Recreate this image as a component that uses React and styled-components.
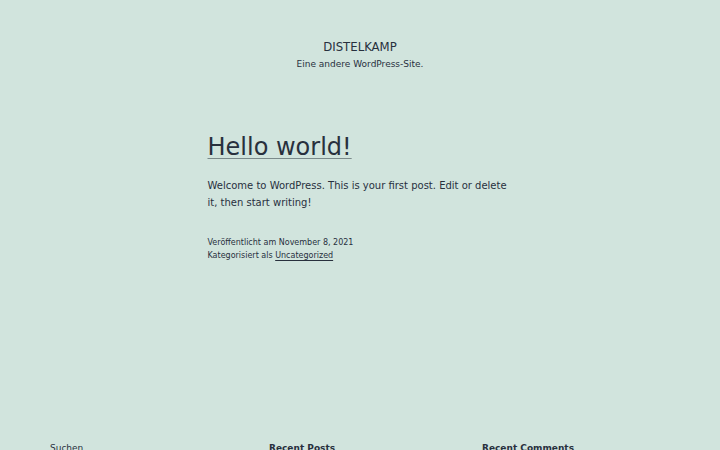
import styled, { createGlobalStyle } from 'styled-components';

const GlobalStyle = createGlobalStyle`
  html, body {
    margin: 0;
    padding: 0;
    background: #d1e4dd;
  }
  body {
    font-family: 'DejaVu Sans', sans-serif;
    color: #28303d;
  }
`;

const Page = styled.div`
  min-height: 450px;
  display: flex;
  flex-direction: column;
`;

const Header = styled.header`
  padding-top: 39px;
  text-align: center;
`;

const SiteTitle = styled.h1`
  margin: 0;
  font-size: 11.7px;
  font-weight: 400;
  line-height: 16px;
  text-transform: uppercase;
`;

const Tagline = styled.p`
  margin: 1px 0 0;
  font-size: 9px;
  line-height: 16px;
`;

const Article = styled.main`
  width: 305px;
  margin: 61px auto 0;
`;

const PostTitle = styled.h2`
  margin: 0;
  font-size: 24px;
  font-weight: 400;
  line-height: 28px;

  a {
    color: inherit;
    text-decoration: underline;
    text-decoration-thickness: 1px;
    text-underline-offset: 3px;
    text-decoration-color: #7b8a8b;
  }
`;

const Body = styled.p`
  margin: 16px 0 0;
  font-size: 10px;
  line-height: 17px;
`;

const Meta = styled.div`
  margin-top: 25px;
  font-size: 8px;
  line-height: 13px;

  a {
    color: inherit;
    text-decoration: underline;
    text-underline-offset: 2px;
  }
`;

const Footer = styled.footer`
  margin-top: auto;
  padding: 0 50px;
  display: grid;
  grid-template-columns: 219px 213px 1fr;
  height: 8px;
  overflow: visible;
`;

const Widget = styled.div`
  font-size: 9px;
  font-weight: ${(p) => (p.$bold ? 700 : 400)};
  line-height: 12px;
  white-space: nowrap;
`;

export default function App() {
  return (
    <>
      <GlobalStyle />
      <Page>
        <Header>
          <SiteTitle>Distelkamp</SiteTitle>
          <Tagline>Eine andere WordPress-Site.</Tagline>
        </Header>
        <Article>
          <PostTitle>
            <a href="#">Hello world!</a>
          </PostTitle>
          <Body>
            Welcome to WordPress. This is your first post. Edit or delete it,
            then start writing!
          </Body>
          <Meta>
            <div>Veröffentlicht am November 8, 2021</div>
            <div>
              Kategorisiert als <a href="#">Uncategorized</a>
            </div>
          </Meta>
        </Article>
        <Footer>
          <Widget>Suchen</Widget>
          <Widget $bold>Recent Posts</Widget>
          <Widget $bold>Recent Comments</Widget>
        </Footer>
      </Page>
    </>
  );
}
